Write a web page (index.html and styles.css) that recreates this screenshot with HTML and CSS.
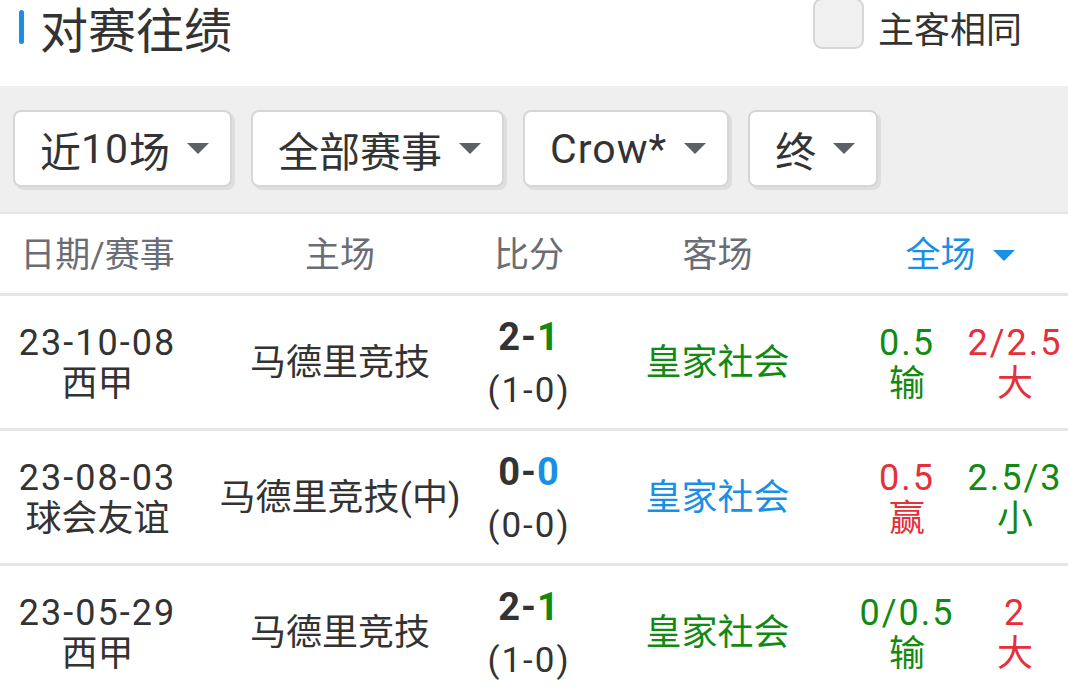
FILE: index.html
```html
<!DOCTYPE html>
<html lang="zh">
<head>
    <meta charset="UTF-8">
    <meta name="viewport" content="width=device-width, initial-scale=1.0">
    <title>对赛往绩</title>
    <link rel="stylesheet" href="styles.css">
</head>
<body>
    <div class="top">
        <div class="title"><span class="mark"></span>对赛往绩</div>
        <label class="same">
            <span class="checkbox"></span>
            <span>主客相同</span>
        </label>
    </div>

    <div class="filters">
        <div class="select">近<span class="num">10</span>场<i class="arrow"></i></div>
        <div class="select">全部赛事<i class="arrow"></i></div>
        <div class="select"><span class="num">Crow*</span><i class="arrow"></i></div>
        <div class="select">终<i class="arrow"></i></div>
    </div>

    <div class="table">
        <div class="row head">
            <div class="cell">日期/赛事</div>
            <div class="cell">主场</div>
            <div class="cell">比分</div>
            <div class="cell away">客场</div>
            <div class="cell full">全场<i class="arrow blue"></i></div>
        </div>

        <div class="row">
            <div class="cell"><span class="num">23-10-08</span><span>西甲</span></div>
            <div class="cell">马德里竞技</div>
            <div class="cell score"><b>2-<em class="green">1</em></b><span class="num">(1-0)</span></div>
            <div class="cell away green">皇家社会</div>
            <div class="cell green"><span class="num">0.5</span><span>输</span></div>
            <div class="cell red"><span class="num">2/2.5</span><span>大</span></div>
        </div>

        <div class="row">
            <div class="cell"><span class="num">23-08-03</span><span>球会友谊</span></div>
            <div class="cell">马德里竞技(中)</div>
            <div class="cell score"><b>0-<em class="blue">0</em></b><span class="num">(0-0)</span></div>
            <div class="cell away blue">皇家社会</div>
            <div class="cell red"><span class="num">0.5</span><span>赢</span></div>
            <div class="cell green"><span class="num">2.5/3</span><span>小</span></div>
        </div>

        <div class="row">
            <div class="cell"><span class="num">23-05-29</span><span>西甲</span></div>
            <div class="cell">马德里竞技</div>
            <div class="cell score"><b>2-<em class="green">1</em></b><span class="num">(1-0)</span></div>
            <div class="cell away green">皇家社会</div>
            <div class="cell green"><span class="num">0/0.5</span><span>输</span></div>
            <div class="cell red"><span class="num">2</span><span>大</span></div>
        </div>
    </div>
</body>
</html>
```

FILE: styles.css
```css
body {
    margin: 0;
    width: 1068px;
    height: 696px;
    overflow: hidden;
    background: #fff;
    color: #333;
    font-family: Roboto, "Noto Sans CJK SC", sans-serif;
}
.num {
    letter-spacing: 2px;
}
.top {
    display: flex;
    justify-content: space-between;
    align-items: flex-start;
    height: 86px;
    padding: 0 46px 0 19px;
}
.title {
    display: flex;
    align-items: center;
    height: 54px;
    font-size: 48px;
    color: #333;
}
.mark {
    width: 5px;
    height: 34px;
    margin-right: 16px;
    border-radius: 3px;
    background: #1a8fe6;
}
.same {
    display: flex;
    align-items: center;
    gap: 14px;
    height: 54px;
    font-size: 36px;
    color: #333;
}
.checkbox {
    width: 47px;
    height: 47px;
    margin-top: -7px;
    border: 2px solid #d6d6d6;
    border-radius: 9px;
    background: #f0f0f0;
}
.filters {
    display: flex;
    gap: 19px;
    height: 128px;
    padding: 24px 0 0 13px;
    box-sizing: border-box;
    background: #efefef;
    border-bottom: 2px solid #e4e4e4;
}
.select {
    display: flex;
    align-items: center;
    height: 77px;
    padding: 0 21px 0 25px;
    box-sizing: border-box;
    border: 2px solid #d6d6d6;
    border-radius: 8px;
    background: #fff;
    box-shadow: 3px 3px 0 #dedede;
    font-size: 41px;
    color: #333;
}
.select .num {
    letter-spacing: 1px;
}
.arrow {
    display: inline-block;
    margin-left: 17px;
    border-left: 11px solid transparent;
    border-right: 11px solid transparent;
    border-top: 11px solid #5e6068;
}
.arrow.blue {
    border-top-color: #1a8fe6;
}
.row {
    display: grid;
    grid-template-columns: 195px 290px 88px 279px 110px 106px;
    height: 135px;
    border-bottom: 3px solid #e6e6e6;
    box-sizing: border-box;
}
.row.head {
    height: 82px;
    grid-template-columns: 195px 290px 88px 279px 216px;
}
.cell {
    display: flex;
    flex-direction: column;
    align-items: center;
    justify-content: center;
    padding-top: 3px;
    white-space: nowrap;
    font-size: 36px;
    line-height: 41px;
}
.cell.away {
    padding-left: 10px;
}
.head .cell {
    font-size: 35px;
    color: #6a6d74;
}
.head .full {
    flex-direction: row;
    color: #1a8fe6;
}
.score {
    line-height: 54px;
}
.score b {
    font-size: 38px;
    color: #333;
    letter-spacing: 1px;
}
.score em {
    font-style: normal;
}
.score span {
    font-size: 35px;
}
.green {
    color: #128a12;
}
.red {
    color: #e5303a;
}
.blue {
    color: #1a8fe6;
}
```
